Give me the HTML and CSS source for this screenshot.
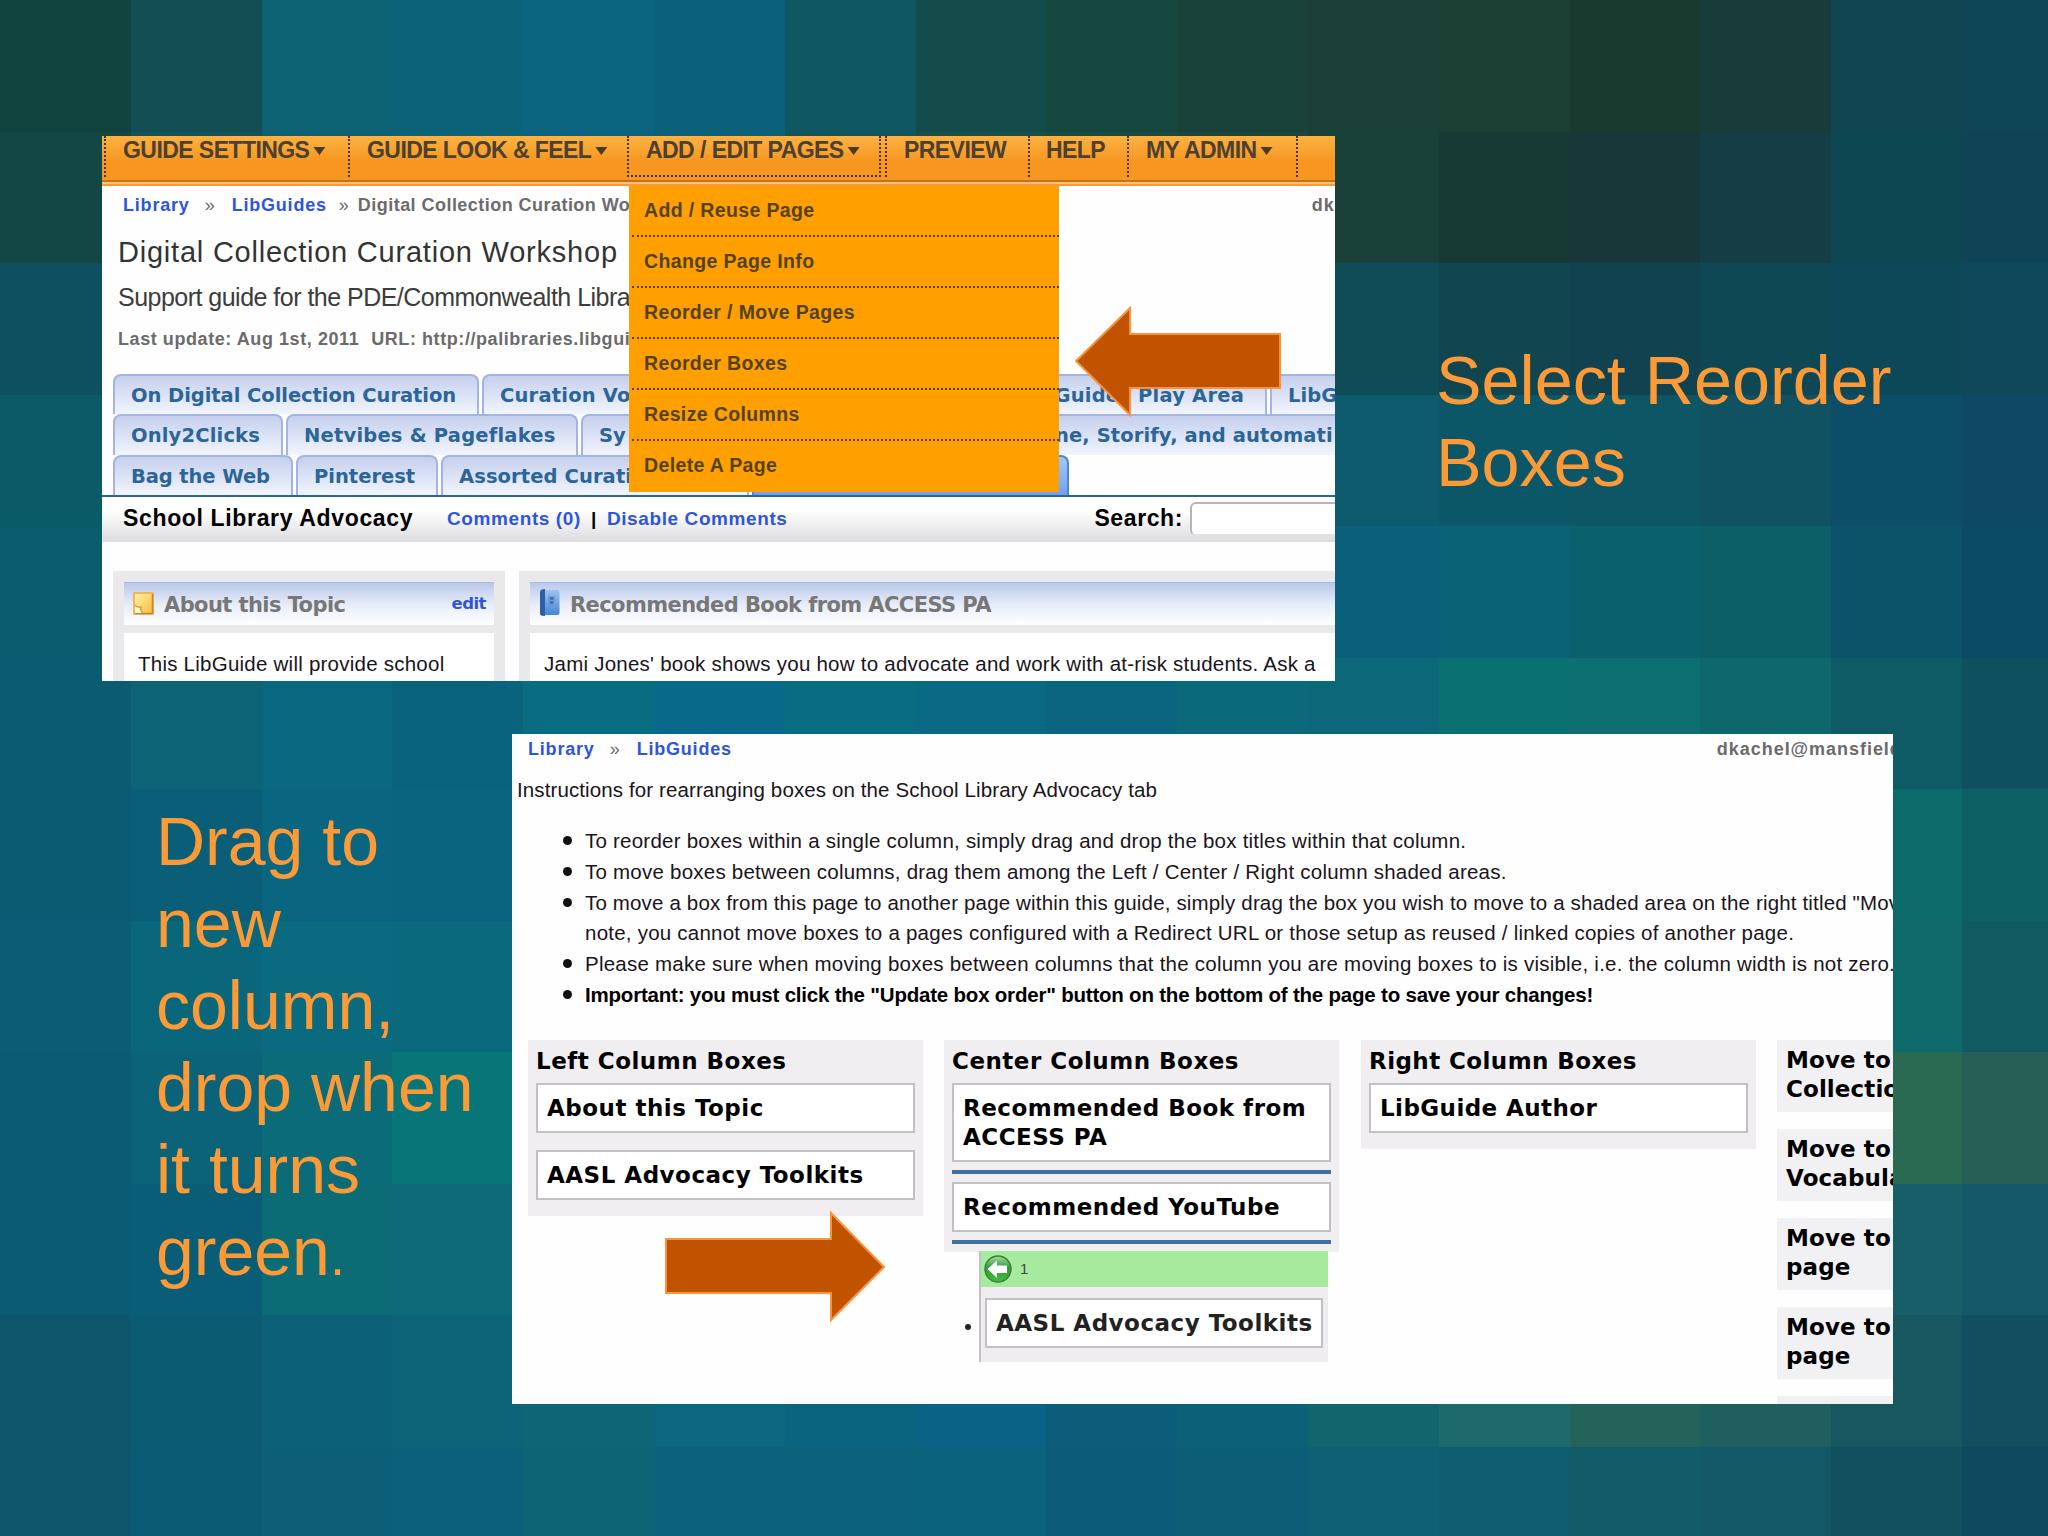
FILE: index.html
```html
<!DOCTYPE html>
<html lang="en">
<head>
    <meta charset="UTF-8">
    <meta name="viewport" content="width=device-width, initial-scale=1.0">
    <title>Reorder Boxes</title>
    <link rel="stylesheet" href="styles.css">
</head>
<body>
    <!-- Tiled background, filled by script.js -->
    <div class="mosaic" id="mosaic"></div>

    <div class="slide">
        <div class="slide-row first-row">
            <!-- Guide admin screen -->
            <div class="screen guide-screen">
                <div class="admin-nav">
                    <div class="nav-item nav-settings">GUIDE SETTINGS<i class="caret"></i></div>
                    <div class="nav-item nav-look">GUIDE LOOK &amp; FEEL<i class="caret"></i></div>
                    <div class="nav-item nav-pages">ADD / EDIT PAGES<i class="caret"></i></div>
                    <div class="nav-item nav-preview">PREVIEW</div>
                    <div class="nav-item nav-help">HELP</div>
                    <div class="nav-item nav-admin">MY ADMIN<i class="caret"></i></div>
                </div>

                <div class="crumbs">
                    <a>Library</a><span class="sep">»</span><a>LibGuides</a><span class="sep sep-tight">»</span><span class="here">Digital Collection Curation Wo</span>
                    <span class="user">dk</span>
                </div>
                <h1 class="guide-title">Digital Collection Curation Workshop</h1>
                <p class="guide-desc">Support guide for the PDE/Commonwealth Libra</p>
                <p class="guide-meta"><span>Last update: Aug 1st, 2011</span><span>URL: http://palibraries.libgui</span></p>

                <div class="tabs">
                    <div class="tab-row">
                        <div class="tab tab-wide">On Digital Collection Curation</div>
                        <div class="tab tab-vocab">Curation Vo</div>
                        <div class="tab tab-play">Guides Play Area</div>
                        <div class="tab tab-last">LibG</div>
                    </div>
                    <div class="tab-row">
                        <div class="tab tab-clicks">Only2Clicks</div>
                        <div class="tab tab-netvibes">Netvibes &amp; Pageflakes</div>
                        <div class="tab tab-sym">Sy</div>
                        <div class="tab tab-last tab-story">ne, Storify, and automati</div>
                    </div>
                    <div class="tab-row">
                        <div class="tab tab-bag">Bag the Web</div>
                        <div class="tab tab-pin">Pinterest</div>
                        <div class="tab tab-assorted">Assorted Curati</div>
                        <div class="tab tab-active"></div>
                    </div>
                </div>

                <div class="page-bar">
                    <span class="page-name">School Library Advocacy</span>
                    <a>Comments (0)</a>
                    <b class="pipe">|</b>
                    <a>Disable Comments</a>
                    <span class="search-label">Search:</span>
                    <span class="search-input"></span>
                </div>

                <div class="boxes">
                    <div class="box box-left">
                        <div class="box-head">
                            <svg class="note-icon" viewBox="0 0 21 23">
                                <defs>
                                    <linearGradient id="note" x1="0" y1="0" x2="1" y2="1">
                                        <stop offset="0" stop-color="#fff3a0"/>
                                        <stop offset="1" stop-color="#f8bc3c"/>
                                    </linearGradient>
                                </defs>
                                <path d="M1 1H20V22H1Z" fill="url(#note)" stroke="#e9ad48" stroke-width="1.6"/>
                                <path d="M19.5 2V21.5H2" fill="none" stroke="#c8872a" stroke-width="1.6"/>
                                <path d="M2 13Q4 16 8 15Q7 19 10 21H2Z" fill="#fff8cc"/>
                                <path d="M2 13Q4 16 8 15Q7 19 10 21" fill="none" stroke="#d08f2c" stroke-width="1.2"/>
                            </svg>
                            <span class="box-title">About this Topic</span>
                            <a class="edit">edit</a>
                        </div>
                        <div class="box-body">This LibGuide will provide school</div>
                    </div>
                    <div class="box box-right">
                        <div class="box-head">
                            <svg class="book-icon" viewBox="0 0 21 27">
                                <defs>
                                    <linearGradient id="book" x1="0" y1="0" x2="0" y2="1">
                                        <stop offset="0" stop-color="#9cc2ee"/>
                                        <stop offset="1" stop-color="#4587d8"/>
                                    </linearGradient>
                                </defs>
                                <rect x="3" y="1" width="17.5" height="25" rx="2" fill="url(#book)"/>
                                <path d="M1 3Q1 0 6 0V27Q0 27 1 24Z" fill="#2f5fa3"/>
                                <rect x="9" y="7" width="7" height="9" fill="#6c9bd2"/>
                                <path d="M11 9.5H14.5M11 13.5H14.5" stroke="#34629f" stroke-width="1.8"/>
                            </svg>
                            <span class="box-title">Recommended Book from ACCESS PA</span>
                        </div>
                        <div class="box-body">Jami Jones' book shows you how to advocate and work with at-risk students. Ask a</div>
                    </div>
                </div>

                <!-- Open "Add / Edit Pages" menu -->
                <ul class="menu">
                    <li>Add / Reuse Page</li>
                    <li>Change Page Info</li>
                    <li>Reorder / Move Pages</li>
                    <li>Reorder Boxes</li>
                    <li>Resize Columns</li>
                    <li>Delete A Page</li>
                </ul>
                <svg class="arrow arrow-left" viewBox="0 0 208 112">
                    <path d="M2 55L56 2V28H206V82H56V109Z"/>
                </svg>
            </div>
            <div class="caption caption-top">Select Reorder<br>Boxes</div>
        </div>

        <div class="slide-row second-row">
            <div class="caption caption-side">Drag to<br>new<br>column,<br>drop when<br>it turns<br>green<span class="dot">.</span></div>

            <!-- Box ordering screen -->
            <div class="screen order-screen">
                <div class="crumbs order-crumbs">
                    <a>Library</a><span class="sep">»</span><a>LibGuides</a>
                    <span class="user">dkachel@mansfield</span>
                </div>
                <p class="intro">Instructions for rearranging boxes on the School Library Advocacy tab</p>
                <ul class="steps">
                    <li>To reorder boxes within a single column, simply drag and drop the box titles within that column.</li>
                    <li>To move boxes between columns, drag them among the Left / Center / Right column shaded areas.</li>
                    <li><span class="snug">To move a box from this page to another page within this guide, simply drag the box you wish to move to a shaded area on the right titled "Mov</span><br>note, you cannot move boxes to a pages configured with a Redirect URL or those setup as reused / linked copies of another page.</li>
                    <li>Please make sure when moving boxes between columns that the column you are moving boxes to is visible, i.e. the column width is not zero.</li>
                    <li class="important">Important: you must click the "Update box order" button on the bottom of the page to save your changes!</li>
                </ul>

                <div class="columns">
                    <div class="column col-left">
                        <h3>Left Column Boxes</h3>
                        <div class="sort-box">About this Topic</div>
                        <div class="sort-box">AASL Advocacy Toolkits</div>
                    </div>
                    <div class="column col-center">
                        <h3>Center Column Boxes</h3>
                        <div class="sort-box tall">Recommended Book from<br>ACCESS PA</div>
                        <div class="rule"></div>
                        <div class="sort-box">Recommended YouTube</div>
                        <div class="rule"></div>
                        <div class="drag">
                            <div class="drag-head">
                                <svg class="back-icon" viewBox="0 0 28 28">
                                    <defs>
                                        <linearGradient id="ball" x1="0" y1="0" x2="0" y2="1">
                                            <stop offset="0" stop-color="#a5dca5"/>
                                            <stop offset="0.45" stop-color="#2f9a35"/>
                                            <stop offset="1" stop-color="#3fc238"/>
                                        </linearGradient>
                                    </defs>
                                    <circle cx="14" cy="14" r="13" fill="url(#ball)" stroke="#3a7d3c" stroke-width="1.4"/>
                                    <path d="M3.5 14L13 5.5V10.5H23V18H13V23Z" fill="#fff"/>
                                </svg>
                                <span>1</span>
                            </div>
                            <div class="sort-box">AASL Advocacy Toolkits</div>
                        </div>
                    </div>
                    <div class="column col-right">
                        <h3>Right Column Boxes</h3>
                        <div class="sort-box">LibGuide Author</div>
                    </div>
                    <div class="targets">
                        <div class="target">Move to<br>Collection</div>
                        <div class="target">Move to<br>Vocabulary</div>
                        <div class="target">Move to<br>page</div>
                        <div class="target">Move to<br>page</div>
                        <div class="target"></div>
                    </div>
                </div>
                <svg class="arrow arrow-right" viewBox="0 0 222 112">
                    <path d="M2 28H167V2L220 56L167 109V82H2Z"/>
                </svg>
            </div>
        </div>
    </div>

    <script src="script.js"></script>
</body>
</html>
```

FILE: styles.css
```css
* {
    box-sizing: border-box;
}

body {
    margin: 0;
    width: 2048px;
    height: 1536px;
    overflow: hidden;
    position: relative;
    background-color: #0c5f77;
    font-family: "Liberation Sans", Arial, sans-serif;
}

h1, h3, p, ul {
    margin: 0;
    padding: 0;
    font-weight: normal;
}

a {
    color: #2f55dc;
}

.mosaic {
    position: absolute;
    top: 0;
    left: 0;
    display: grid;
    grid-template-columns: repeat(16, 130.8px);
    grid-auto-rows: 131.5px;
}

.slide {
    position: relative;
    padding-top: 136px;
}

.slide-row {
    display: flex;
}

.first-row {
    padding-left: 102px;
    margin-bottom: 53px;
}

.second-row {
    padding-left: 156px;
}

.caption {
    color: #fb9a36;
    font-size: 68.3px;
    line-height: 82px;
    white-space: nowrap;
}

.caption-top {
    padding: 203px 0 0 101px;
}

.caption-side {
    width: 356px;
    padding-top: 66px;
    font-size: 68px;
}

.dot {
    font-size: 54px;
}

.screen {
    position: relative;
    overflow: hidden;
    background-color: #fefefe;
    white-space: nowrap;
}

/* Guide admin screen */
.guide-screen {
    width: 1233px;
    height: 545px;
}

.admin-nav {
    display: flex;
    height: 50px;
    padding-left: 2px;
    background: linear-gradient(#fbb243, #f79621 26px, #f79621 44px, #c67310 44px, #c67310 46px, #ffc080 46px, #ffc080 48px, #f79a3a 48px);
}

.nav-item {
    display: flex;
    flex: none;
    height: 41px;
    padding: 0 0 0 17px;
    border-left: 2px dotted #4a3205;
    color: #4c4030;
    font-size: 23px;
    font-weight: bold;
    line-height: 29px;
    letter-spacing: -0.56px;
}

.nav-settings { width: 244px; }
.nav-look { width: 279px; }
.nav-preview { width: 143px; margin-left: 4px; }
.nav-help { width: 99px; padding-left: 16px; }

.nav-pages {
    width: 254px;
    border-right: 2px dotted #4a3205;
    border-bottom: 2px dotted #4a3205;
}

.nav-admin {
    width: 171px;
    border-right: 2px dotted #4a3205;
}

.caret {
    width: 12px;
    height: 8px;
    margin: 11px 0 0 4px;
    background-color: #4a3a20;
    clip-path: polygon(0 0, 100% 0, 50% 100%);
}

.crumbs {
    display: flex;
    height: 38px;
    padding-left: 21px;
    color: #6b6b6b;
    font-size: 18px;
    font-weight: bold;
    line-height: 38px;
    letter-spacing: 0.8px;
}

.crumbs > * {
    flex: none;
}

.sep {
    width: 42px;
    padding-left: 15px;
    font-weight: normal;
}

.sep-tight {
    width: 31px;
    padding-left: 12px;
}

.here {
    width: 954px;
    letter-spacing: 0.46px;
}

.guide-title {
    height: 58px;
    padding-left: 16px;
    color: #333;
    font-size: 29px;
    line-height: 56px;
    letter-spacing: 0.78px;
}

.guide-desc {
    height: 32px;
    padding-left: 16px;
    color: #3c3c3c;
    font-size: 25px;
    line-height: 30px;
    letter-spacing: -0.52px;
}

.guide-meta {
    display: flex;
    gap: 12px;
    height: 60px;
    padding-left: 16px;
    color: #6b6b6b;
    font-size: 18px;
    font-weight: bold;
    line-height: 50px;
    letter-spacing: 0.57px;
}

.tabs {
    height: 123px;
    padding-left: 11px;
    border-bottom: 2px solid #2b62a2;
}

.tab-row {
    display: flex;
    gap: 3px;
    height: 40.3px;
}

.tab {
    flex: none;
    height: 40.3px;
    padding-left: 16px;
    border: 2px solid #a3b3e2;
    border-bottom: none;
    border-radius: 8px 8px 0 0;
    background: linear-gradient(#c6d0ed, #f1f5fe);
    color: #2c6597;
    font-family: "DejaVu Sans", Verdana, sans-serif;
    font-size: 19.5px;
    font-weight: bold;
    line-height: 40px;
}

.tab-wide { width: 366px; letter-spacing: -0.06px; }
.tab-vocab { width: 460px; letter-spacing: 0.2px; }
.tab-play { width: 322px; padding-right: 21px; text-align: right; letter-spacing: 0.2px; }
.tab-last { width: 600px; letter-spacing: 0.1px; }
.tab-clicks { width: 170px; letter-spacing: 0.16px; }
.tab-netvibes { width: 292px; letter-spacing: 0.2px; }
.tab-sym { width: 389px; }
.tab-story { padding-left: 80px; }
.tab-bag { width: 180px; letter-spacing: -0.1px; }
.tab-pin { width: 142px; }
.tab-assorted { width: 308px; letter-spacing: 0.1px; }

.tab-active {
    width: 317px;
    border-color: #4e86d6;
    background: linear-gradient(#a8c6f8, #6fa0f0);
}

.page-bar {
    display: flex;
    align-items: flex-start;
    height: 45px;
    padding-left: 21px;
    background: linear-gradient(#fff 30%, #dcdcdf);
    font-size: 19px;
    font-weight: bold;
    line-height: 44px;
    letter-spacing: 0.6px;
}

.page-name {
    width: 324px;
    font-size: 23px;
    line-height: 42px;
    letter-spacing: 0.65px;
}

.pipe {
    width: 26px;
    padding-left: 10px;
}

.search-label {
    margin-left: auto;
    padding-right: 7px;
    font-size: 23px;
    line-height: 42px;
    letter-spacing: 0.6px;
}

.search-input {
    width: 145px;
    height: 34px;
    margin-top: 5px;
    border: 2px solid #bcb2ba;
    border-right: none;
    border-bottom-color: #e4e0e4;
    border-radius: 6px 0 0 6px;
    background-color: #fff;
}

.boxes {
    display: flex;
    gap: 14px;
    padding: 29px 0 0 11px;
}

.box {
    padding: 11px 11px 0;
    background-color: #e9e9eb;
}

.box-left { width: 392px; }
.box-right { width: 816px; padding-right: 0; }

.box-head {
    display: flex;
    align-items: flex-start;
    height: 43px;
    padding: 0 8px 0 8px;
    border-top: 1px solid #a9b9dc;
    background: linear-gradient(#bac8ea, #e6ecf8 50%, #fff);
}

.note-icon {
    width: 21px;
    height: 23px;
    margin: 9px 10px 0 1px;
}

.book-icon {
    width: 21px;
    height: 27px;
    margin: 6px 10px 0 1px;
}

.box-title {
    color: #777;
    font-family: "DejaVu Sans", Verdana, sans-serif;
    font-size: 21px;
    font-weight: bold;
    line-height: 44px;
    letter-spacing: -0.58px;
}

.edit {
    margin-left: auto;
    font-family: "DejaVu Sans", Verdana, sans-serif;
    font-size: 16.5px;
    font-weight: bold;
    line-height: 41px;
    letter-spacing: -0.5px;
}

.box-body {
    height: 60px;
    margin-top: 8px;
    padding-left: 14px;
    background-color: #fff;
    color: #1a1420;
    font-size: 20.5px;
    line-height: 61px;
    letter-spacing: 0.24px;
}

.menu {
    position: absolute;
    top: 50px;
    left: 527px;
    width: 430px;
    height: 306px;
    padding: 0 0 0 3px;
    background-color: #ff9f00;
    list-style: none;
}

.menu li {
    height: 51px;
    padding-left: 12px;
    border-bottom: 2px dotted #5a3a00;
    color: #54421a;
    font-size: 19.5px;
    font-weight: bold;
    line-height: 48px;
    letter-spacing: 0.36px;
}

.menu li:last-child {
    border-bottom: none;
}

.arrow {
    position: absolute;
    fill: #c05200;
    stroke: #f8943c;
    stroke-width: 2;
}

.arrow-left {
    top: 170px;
    left: 972px;
    width: 208px;
    height: 112px;
}

.arrow-right {
    top: 477px;
    left: 152px;
    width: 222px;
    height: 112px;
}

/* Box ordering screen */
.order-screen {
    width: 1381px;
    height: 670px;
}

.order-crumbs {
    height: 32px;
    padding-left: 16px;
    line-height: 31px;
}

.order-crumbs .user {
    margin-left: 985px;
    letter-spacing: 0.96px;
}

.intro {
    height: 50px;
    padding-left: 5px;
    color: #1a1420;
    font-size: 20.5px;
    line-height: 48px;
    letter-spacing: 0.11px;
}

.steps {
    height: 224px;
    padding: 10px 0 0 73px;
    list-style: none;
    color: #1a1420;
    font-size: 20.5px;
    line-height: 30.8px;
    letter-spacing: 0.23px;
}

.steps li::before {
    content: "";
    display: inline-block;
    width: 9px;
    height: 9px;
    margin: 0 13px 3px -22px;
    border-radius: 50%;
    background-color: #111;
}

.steps .snug {
    letter-spacing: 0.16px;
}

.steps .important {
    font-weight: bold;
    color: #000;
    letter-spacing: -0.21px;
}

.columns {
    display: flex;
    align-items: flex-start;
    gap: 21px;
    padding-left: 16px;
    font-family: "DejaVu Sans", Verdana, sans-serif;
    font-size: 23px;
    font-weight: bold;
    letter-spacing: 0.5px;
}

.column {
    flex: none;
    width: 395px;
    padding: 0 8px;
    background-color: #f0eef0;
}

.column h3 {
    height: 43px;
    font-size: 23px;
    font-weight: bold;
    line-height: 42px;
}

.col-left { height: 176px; }
.col-center { height: 212px; }
.col-right { height: 109px; margin-left: 1px; letter-spacing: 0.43px; }

.sort-box {
    height: 50px;
    padding-left: 9px;
    border: 2px solid #c2c0c4;
    background-color: #fff;
    line-height: 47px;
}

.col-left .sort-box {
    margin-bottom: 17px;
}

.tall {
    height: 79px;
    padding-top: 9px;
    line-height: 29px;
}

.rule {
    height: 4px;
    margin: 8px 0 8px;
    background-color: #40709f;
}

.drag {
    position: relative;
    width: 349px;
    height: 111px;
    margin: -1px 0 0 27px;
    padding: 0 5px 0 4px;
    border-left: 2px solid #c4c2c6;
    background-color: #efedef;
}

.drag::before {
    content: "";
    position: absolute;
    top: 73px;
    left: -16px;
    width: 6px;
    height: 6px;
    border-radius: 50%;
    background-color: #222;
}

.drag-head {
    display: flex;
    align-items: center;
    gap: 8px;
    height: 36px;
    margin: 0 -5px 11px -4px;
    padding-left: 3px;
    background-color: #a6ea9d;
    color: #444;
    font-family: "Liberation Sans", Arial, sans-serif;
    font-size: 15px;
    font-weight: normal;
    line-height: 32px;
}

.back-icon {
    width: 28px;
    height: 28px;
}

.drag .sort-box {
    color: #222;
}

.targets {
    display: flex;
    flex: none;
    flex-direction: column;
    gap: 17px;
    width: 300px;
    letter-spacing: 0.1px;
}

.target {
    height: 72px;
    padding: 6px 0 0 9px;
    background-color: #f1f1f3;
    line-height: 29px;
}
```

FILE: script.js
```javascript
// Tile colours, one string per row of the background
const tiles = [
    '12443f 124e52 0d6273 0b6279 0b6580 0b607a 0f5862 134c4b 164840 194239 1a4038 1a3f33 193b2f 183d39 0f4652 0e4658',
    '124743 11535a 0c6274 0b6479 0b6280 0b607a 10555f 17504b 1a4a44 1b463e 1a4138 183a35 183738 153d45 0d4852 0f4456',
    '0e5060 0d5a66 0c6274 0b6479 0b6280 0b607a 10555f 0e5260 0e5060 0e4e5c 0e4c58 11454f 10424f 0d4854 0d4859 0f485a',
    '0b5a68 0b5c6c 0c6274 0b6479 0b6280 0b607a 0c5f70 0c5f70 0c5d6c 0c5c6c 0c5a6b 0c5767 0d5666 105162 0c4d67 0d4964',
    '0a5c6c 0b5c6c 0c6274 0b6479 0b6280 0b607a 0c5f70 0c5f70 0b6070 0b6078 0b5f7a 0a6276 0b606d 0d5f67 0b5369 0b4b65',
    '0b5c72 0c6476 0a6780 0a637e 0a6c80 09698a 0a6c80 0a6a85 0a6680 0a6a7c 0a6878 0b7070 0e6f70 0e676b 0e5a65 0e4f60',
    '0b5b72 0b5e77 0a6680 09647f 0a6c80 09698a 0a6c80 0b6478 0a6080 0c6674 0b6c74 0b7070 0e6f70 0e676b 0c6a6a 0d6063',
    '0a5d74 0a667a 0a6a80 0a697c 0a6c80 09698a 0a6c80 0b6478 0a6080 0c6674 0b6c74 0b7070 0e6f70 0e676b 10696a 115a62',
    '0a5c74 0b637a 0c6b78 087678 0a6c80 09698a 0a6c80 0b6478 0a6080 0c6674 0b6c74 0b7070 0e6f70 0e676b 2a6a52 255f55',
    '0a5b74 0a5d77 0b6c75 0d6a78 0a6c80 09698a 0a6c80 0b6478 0a6080 0c6674 0b6c74 0b7070 0e6f70 0e676b 175e68 14586a',
    '0e566c 0b5c72 0c6077 0d6377 0d6576 0b6680 0a6480 0a6286 0c5d7a 0c6078 11666c 1e696b 256259 205f60 175760 114f60',
    '0e566c 0b5a74 0c5f77 0d607a 0c6475 0d627b 0d627b 0a627c 0c5b78 0c5d76 0e6075 105c70 115c68 125866 10505f 0d4a5f'
];

const mosaic = document.getElementById('mosaic');
tiles.join(' ').split(' ').forEach(color => {
    const tile = document.createElement('div');
    tile.style.backgroundColor = '#' + color;
    mosaic.appendChild(tile);
});
```
